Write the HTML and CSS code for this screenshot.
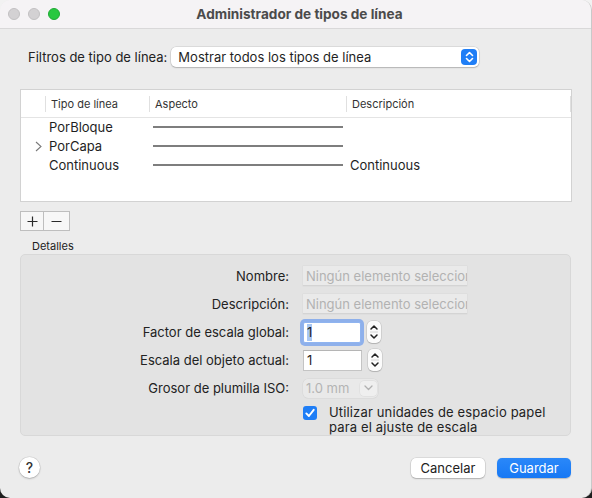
FILE: index.html
```html
<!DOCTYPE html>
<html lang="es">
<head>
<meta charset="utf-8">
<title>Administrador de tipos de línea</title>
<link rel="stylesheet" href="styles.css">
</head>
<body>
<div class="window">
  <div class="titlebar">
    <div class="lights">
      <span class="light gray"></span>
      <span class="light gray"></span>
      <span class="light green"></span>
    </div>
    <div class="title">Administrador de tipos de línea</div>
    <div></div>
  </div>
  <div class="content">
    <div class="filter-row">
      <span class="filter-label">Filtros de tipo de línea:</span>
      <div class="popup">
        <span class="popup-text">Mostrar todos los tipos de línea</span>
        <span class="popup-arrows">
          <svg width="9" height="12" viewBox="0 0 9 12"><polyline points="1.5,4.5 4.5,1.5 7.5,4.5" fill="none" stroke="#fff" stroke-width="1.6" stroke-linecap="round" stroke-linejoin="round"/><polyline points="1.5,7.5 4.5,10.5 7.5,7.5" fill="none" stroke="#fff" stroke-width="1.6" stroke-linecap="round" stroke-linejoin="round"/></svg>
        </span>
      </div>
    </div>

    <div class="table">
      <div class="thead">
        <div class="th th-first"></div>
        <div class="th">Tipo de línea</div>
        <div class="th">Aspecto</div>
        <div class="th th-last">Descripción</div>
      </div>
      <div class="tbody">
        <div class="tr">
          <div class="td td-first"></div>
          <div class="td">PorBloque</div>
          <div class="td"><span class="linesample"></span></div>
          <div class="td td-desc"></div>
        </div>
        <div class="tr">
          <div class="td td-first">
            <svg width="7" height="11" viewBox="0 0 7 11"><polyline points="1,1 6,5.5 1,10" fill="none" stroke="#7a7a7a" stroke-width="1.1"/></svg>
          </div>
          <div class="td">PorCapa</div>
          <div class="td"><span class="linesample"></span></div>
          <div class="td td-desc"></div>
        </div>
        <div class="tr">
          <div class="td td-first"></div>
          <div class="td">Continuous</div>
          <div class="td"><span class="linesample"></span></div>
          <div class="td td-desc">Continuous</div>
        </div>
      </div>
    </div>

    <div class="plusminus">
      <div class="pm-btn pm-plus">
        <svg width="11" height="11" viewBox="0 0 11 11"><line x1="5.5" y1="0.5" x2="5.5" y2="10.5" stroke="#2a2a2a" stroke-width="1.2"/><line x1="0.5" y1="5.5" x2="10.5" y2="5.5" stroke="#2a2a2a" stroke-width="1.2"/></svg>
      </div>
      <div class="pm-btn pm-minus">
        <svg width="11" height="11" viewBox="0 0 11 11"><line x1="0.5" y1="5.5" x2="10.5" y2="5.5" stroke="#2a2a2a" stroke-width="1.2"/></svg>
      </div>
    </div>

    <div class="section-label">Detalles</div>

    <div class="details">
      <div class="form">
        <div class="flabel">Nombre:</div>
        <div class="fcell"><div class="field disabled"><span class="placeholder">Ningún elemento seleccionado</span></div></div>

        <div class="flabel">Descripción:</div>
        <div class="fcell"><div class="field disabled"><span class="placeholder">Ningún elemento seleccionado</span></div></div>

        <div class="flabel">Factor de escala global:</div>
        <div class="fcell">
          <div class="field num focused"><span class="sel">1</span></div>
          <span class="stepper">
            <svg width="14" height="22" viewBox="0 0 14 22"><polyline points="4,8 7,5 10,8" fill="none" stroke="#222" stroke-width="1.5" stroke-linecap="round" stroke-linejoin="round"/><line x1="3" y1="11" x2="11" y2="11" stroke="#d6d6d6" stroke-width="1"/><polyline points="4,14 7,17 10,14" fill="none" stroke="#222" stroke-width="1.5" stroke-linecap="round" stroke-linejoin="round"/></svg>
          </span>
        </div>

        <div class="flabel">Escala del objeto actual:</div>
        <div class="fcell">
          <div class="field num">1</div>
          <span class="stepper">
            <svg width="14" height="22" viewBox="0 0 14 22"><polyline points="4,8 7,5 10,8" fill="none" stroke="#222" stroke-width="1.5" stroke-linecap="round" stroke-linejoin="round"/><line x1="3" y1="11" x2="11" y2="11" stroke="#d6d6d6" stroke-width="1"/><polyline points="4,14 7,17 10,14" fill="none" stroke="#222" stroke-width="1.5" stroke-linecap="round" stroke-linejoin="round"/></svg>
          </span>
        </div>

        <div class="flabel">Grosor de plumilla ISO:</div>
        <div class="fcell">
          <div class="minipopup">
            <span class="mini-text">1.0 mm</span>
            <span class="mini-arrow"><svg width="9" height="6" viewBox="0 0 9 6"><polyline points="1,1 4.5,4.5 8,1" fill="none" stroke="#b0b0b0" stroke-width="1.3" stroke-linecap="round" stroke-linejoin="round"/></svg></span>
          </div>
        </div>

        <div class="flabel"></div>
        <div class="fcell check-cell">
          <span class="checkbox"><svg width="14" height="14" viewBox="0 0 14 14"><polyline points="3.3,7.4 5.9,10 10.7,3.8" fill="none" stroke="#fff" stroke-width="1.9" stroke-linecap="round" stroke-linejoin="round"/></svg></span>
          <span class="check-text">Utilizar unidades de espacio papel<br>para el ajuste de escala</span>
        </div>
      </div>
    </div>

    <div class="footer">
      <div class="help">?</div>
      <div class="spacer"></div>
      <div class="btn btn-cancel">Cancelar</div>
      <div class="btn btn-save">Guardar</div>
    </div>
  </div>
</div>
</body>
</html>
```

FILE: styles.css
```css
* { box-sizing: border-box; }
html, body {
  margin: 0;
  padding: 0;
  width: 592px;
  height: 498px;
  overflow: hidden;
}
body {
  background: linear-gradient(#f2f2f2 50%, #1e1e1e 50%);
  font-family: "Inter", "Liberation Sans", sans-serif;
  font-size: 13px;
  color: #1f1f1f;
}
.window {
  width: 592px;
  height: 498px;
  background: #ececec;
  border-radius: 10px;
  border-right: 1px solid #c9c9c9;
  overflow: hidden;
  display: flex;
  flex-direction: column;
}
.titlebar {
  height: 29px;
  flex: none;
  background: #f5f3f5;
  border-bottom: 1px solid #d9d8d9;
  display: grid;
  grid-template-columns: 1fr auto 1fr;
  align-items: center;
}
.lights {
  display: flex;
  gap: 8px;
  padding-left: 8px;
}
.light {
  width: 12px;
  height: 12px;
  border-radius: 50%;
  display: block;
}
.light.gray { background: #d3d1d3; border: 0.5px solid #c2c0c2; }
.light.green { background: #28c840; border: 0.5px solid #1faa34; }
.title {
  font-weight: 700;
  font-size: 13.6px;
  color: #4b4b4b;
  padding-left: 8px;
}
.content {
  padding: 0 20px;
  display: flex;
  flex-direction: column;
}
.filter-row {
  margin-top: 18px;
  padding-left: 8px;
  display: flex;
  align-items: center;
  gap: 4px;
  height: 20px;
}
.filter-label { color: #222; }
.popup {
  width: 308px;
  height: 20px;
  background: #fff;
  border-radius: 5px;
  box-shadow: 0 0 0 0.5px rgba(0,0,0,0.14), 0 1px 1.5px rgba(0,0,0,0.18);
  display: flex;
  align-items: center;
  padding-left: 7px;
  padding-right: 2px;
}
.popup-text { flex: 1; color: #1f1f1f; }
.popup-arrows {
  width: 16px;
  height: 16px;
  border-radius: 4px;
  background: #1f7ef6;
  display: flex;
  align-items: center;
  justify-content: center;
}
.table {
  margin-top: 22px;
  width: 552px;
  height: 113px;
  background: #fff;
  border: 1px solid #d2d2d2;
  display: flex;
  flex-direction: column;
}
.thead, .tr {
  display: grid;
  grid-template-columns: 24px 104px 197px 225px;
}
.thead {
  height: 28px;
  padding-top: 6px;
  padding-bottom: 5px;
  border-bottom: 1px solid #e4e4e4;
}
.th {
  height: 16px;
  border-left: 1px solid #e0e0e0;
  font-size: 11px;
  color: #333;
  padding-left: 5px;
  line-height: 16px;
  white-space: nowrap;
}
.th-first { border-left: none; }
.th-last { border-right: 1px solid #e0e0e0; }
.tr { height: 19px; }
.td {
  line-height: 19px;
  padding-left: 4px;
  white-space: nowrap;
  display: flex;
  align-items: center;
  color: #1f1f1f;
}
.td-first {
  justify-content: flex-end;
  padding-right: 3px;
  padding-left: 0;
}
.td-desc { padding-left: 4px; }
.linesample {
  display: block;
  width: 190px;
  height: 2px;
  background: #7e7e7e;
  margin-top: -1px;
}
.plusminus {
  margin-top: 9px;
  display: flex;
  width: 50px;
  height: 20px;
  border: 1px solid #bebebe;
  background: #f7f7f7;
}
.pm-btn {
  display: flex;
  align-items: center;
  justify-content: center;
  height: 100%;
}
.pm-plus { width: 23px; border-right: 1px solid #bebebe; }
.pm-minus { flex: 1; }
.section-label {
  margin-top: 8px;
  padding-left: 12px;
  font-size: 11px;
  line-height: 14px;
  color: #222;
  margin-bottom: 1px;
}
.details {
  background: #e3e3e3;
  border: 1px solid #d8d8d8;
  border-radius: 5px;
  padding: 7px 0 5px 0;
}
.form {
  display: grid;
  grid-template-columns: 268px 1fr;
  column-gap: 14px;
  grid-auto-rows: 28px;
}
.flabel {
  text-align: right;
  align-self: center;
  color: #222;
  white-space: nowrap;
}
.fcell {
  display: flex;
  align-items: center;
  gap: 6px;
}
.field {
  height: 20px;
  display: flex;
  align-items: center;
  padding-left: 3px;
  overflow: hidden;
  white-space: nowrap;
}
.field.disabled {
  width: 164px;
  background: #eaeaea;
  box-shadow: inset 0 -1px 0 #d4d4d4, 0 0 0 0.5px #dadada;
}
.placeholder { color: #b2b2b2; }
.field.num {
  width: 59px;
  height: 21px;
  background: #fff;
  border: 1px solid #c4c4c4;
  border-top-color: #b5b5b5;
}
.field.focused {
  width: 58px;
  border-color: #8fb4f0;
  box-shadow: 0 0 0 3px rgba(90,145,240,0.62);
  border-radius: 2px;
}
.sel {
  background: #a8c7f3;
  padding: 1px 0;
  line-height: 15px;
}
.stepper {
  width: 14px;
  height: 22px;
  background: #fbfbfb;
  border-radius: 5px;
  box-shadow: 0 0 0 0.5px rgba(0,0,0,0.15), 0 1px 1px rgba(0,0,0,0.15);
  display: block;
}
.stepper svg { display: block; }
.minipopup {
  width: 75px;
  height: 19px;
  border-radius: 5px;
  background: #e9e9e9;
  box-shadow: 0 0 0 0.5px #d5d5d5;
  display: flex;
  align-items: center;
  padding-left: 3px;
  padding-right: 1px;
}
.mini-text { flex: 1; color: #b4b4b4; }
.mini-arrow {
  width: 17px;
  height: 15px;
  border-radius: 4px;
  background: #efefef;
  box-shadow: 0 0 0 0.5px #dadada;
  display: flex;
  align-items: center;
  justify-content: center;
}
.check-cell {
  grid-column: 2;
  align-items: flex-start;
  gap: 12px;
  margin-top: 3px;
  height: 32px;
}
.checkbox {
  width: 14px;
  height: 14px;
  margin-top: 1px;
  border-radius: 3px;
  background: #1f7ef6;
  display: block;
  flex: none;
}
.checkbox svg { display: block; }
.check-text {
  line-height: 15px;
  color: #222;
  letter-spacing: 0.15px;
}
.footer {
  margin-top: 21px;
  display: flex;
  align-items: center;
  height: 21px;
}
.help {
  width: 21px;
  height: 21px;
  margin-left: -1px;
  border-radius: 50%;
  background: #fff;
  box-shadow: 0 0 0 0.5px rgba(0,0,0,0.12), 0 1px 2px rgba(0,0,0,0.2);
  display: flex;
  align-items: center;
  justify-content: center;
  font-size: 14px;
  font-weight: 500;
  color: #333;
}
.spacer { flex: 1; }
.btn {
  width: 74px;
  height: 20px;
  border-radius: 5px;
  display: flex;
  align-items: center;
  justify-content: center;
}
.btn-cancel {
  background: #fff;
  color: #222;
  box-shadow: 0 0 0 0.5px rgba(0,0,0,0.14), 0 1px 1.5px rgba(0,0,0,0.2);
  margin-right: 12px;
}
.btn-save {
  background: linear-gradient(#2a88f9, #1778f4);
  color: #fff;
  box-shadow: 0 0.5px 1px rgba(0,0,0,0.2);
}
```
